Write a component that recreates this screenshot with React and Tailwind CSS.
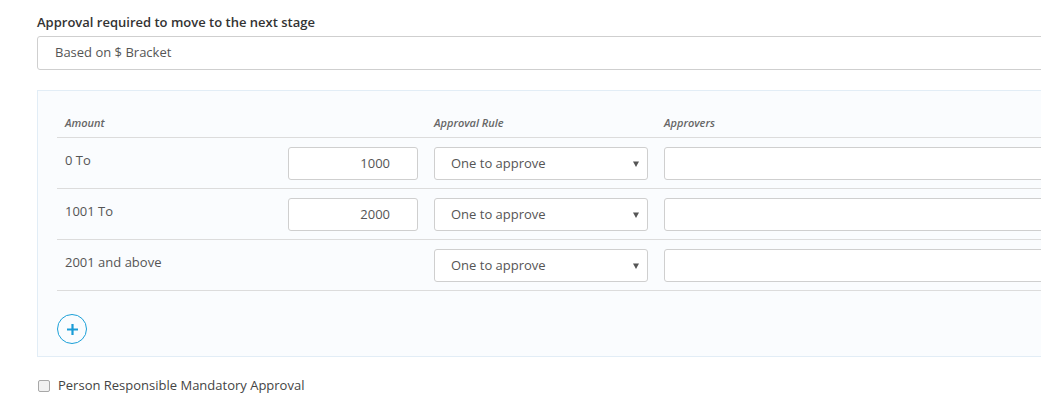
import React from "react";

function Row({ label, value }) {
  return (
    <div className="grid grid-cols-[223px_146px_230px_1fr] border-b border-[#dcdcdc] h-[51px]">
      <div className="pl-2 pt-[12px] leading-[20px] text-[13px] text-[#555]">{label}</div>
      <div className="px-2 pt-[9px]">
        {value ? (
          <div className="h-[33px] w-[130px] bg-white border border-[#cfcfcf] rounded-[3px] flex items-center justify-end pr-[27px] text-[13px] text-[#555]">
            {value}
          </div>
        ) : null}
      </div>
      <div className="px-2 pt-[9px]">
        <div className="h-[33px] w-[214px] bg-white border border-[#cfcfcf] rounded-[3px] flex items-center justify-between pl-[16px] pr-[8px] text-[13px] text-[#555]">
          <span>One to approve</span>
          <svg width="6" height="6" viewBox="0 0 6 6">
            <path d="M0 0.5h6L3 6z" fill="#555" />
          </svg>
        </div>
      </div>
      <div className="px-2 pt-[9px]">
        <div className="h-[33px] w-full bg-white border border-[#cfcfcf] rounded-[3px]" />
      </div>
    </div>
  );
}

export default function App() {
  return (
    <div className="w-full overflow-hidden bg-white" style={{ fontFamily: '"Open Sans", sans-serif' }}>
      <div className="w-[1400px] pl-[37px] pt-[13px] pb-[3px]">
        <div className="text-[13px] leading-[18px] font-semibold text-[#333] mb-[5px]">
          Approval required to move to the next stage
        </div>
        <div className="h-[34px] border border-[#cfcfcf] rounded-[3px] bg-white flex items-center pl-[17px] text-[13px] text-[#555]">
          Based on $ Bracket
        </div>
        <div className="mt-[20px] border border-[#e2edf6] bg-[#fafcfe] pl-[19px] pt-5 pb-[12px]">
          <div className="grid grid-cols-[223px_146px_230px_1fr] border-b border-[#dcdcdc] h-[27px] pt-1 leading-[15px] text-[11px] italic font-semibold text-[#666]">
            <div className="pl-2">Amount</div>
            <div />
            <div className="pl-2">Approval Rule</div>
            <div className="pl-2">Approvers</div>
          </div>
          <Row label="0 To" value="1000" />
          <Row label="1001 To" value="2000" />
          <Row label="2001 and above" />
          <div className="mt-[23px] w-[30px] h-[30px] rounded-full border border-[#1ba0d8] flex items-center justify-center">
            <svg width="13" height="13" viewBox="0 0 13 13">
              <path d="M6.5 1v11M1 6.5h11" stroke="#1a9cd6" strokeWidth="2.2" />
            </svg>
          </div>
        </div>
        <div className="mt-[20px] h-[18px] flex items-center">
          <span className="ml-[1px] w-[12px] h-[12px] rounded-[2px] border border-[#a8a8a8] bg-[#f1f1f1]" />
          <span className="ml-[8px] text-[13px] text-[#444]">Person Responsible Mandatory Approval</span>
        </div>
      </div>
    </div>
  );
}
